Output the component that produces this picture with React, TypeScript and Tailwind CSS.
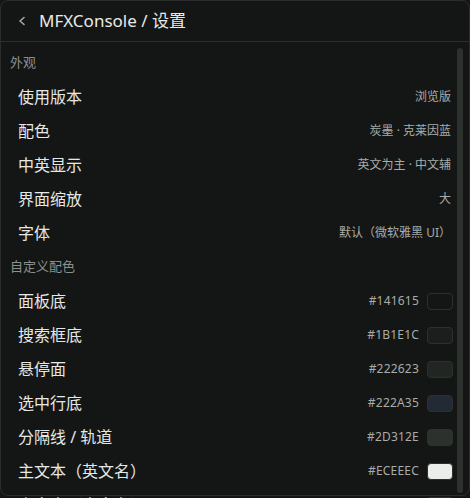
const appearance = [
  { label: "使用版本", value: "浏览版" },
  { label: "配色", value: "炭墨 · 克莱因蓝" },
  { label: "中英显示", value: "英文为主 · 中文辅" },
  { label: "界面缩放", value: "大" },
  { label: "字体", value: "默认（微软雅黑 UI）" },
];

const colors = [
  { label: "面板底", hex: "#141615", swatch: "bg-[#141615]" },
  { label: "搜索框底", hex: "#1B1E1C", swatch: "bg-[#1b1e1c]" },
  { label: "悬停面", hex: "#222623", swatch: "bg-[#222623]" },
  { label: "选中行底", hex: "#222A35", swatch: "bg-[#222a35]" },
  { label: "分隔线 / 轨道", hex: "#2D312E", swatch: "bg-[#2d312e]" },
  { label: "主文本（英文名）", hex: "#ECEEEC", swatch: "bg-[#eceeec]" },
  { label: "次文本（中文名）", hex: "#8B908D", swatch: "bg-[#8b908d]" },
];

const font = { fontFamily: '"Noto Sans", "Noto Sans CJK SC", sans-serif' };

function SectionLabel({ children }: { children: string }) {
  return (
    <div className="flex h-[34px] items-center pl-[9px] text-[13px] text-[#8b908d]">
      {children}
    </div>
  );
}

function Row({ label, children }: { label: string; children: React.ReactNode }) {
  return (
    <div className="flex h-[34px] items-center justify-between pl-[17px]">
      <span className="text-[16px] text-[#e6e8e6]">{label}</span>
      {children}
    </div>
  );
}

export default function App() {
  return (
    <div className="h-[498px] w-[470px] bg-[#141615]" style={font}>
      <div className="flex h-[496px] flex-col rounded-lg border border-[#2a2d2b] bg-[#141615]">
        <header className="flex h-[41px] shrink-0 items-center gap-[13px] border-b border-[#2d312e] pl-[17px]">
          <svg width="8" height="10" viewBox="0 0 8 10" className="text-[#a4a8a5]">
            <polyline
              points="6,1.5 2,5 6,8.5"
              fill="none"
              stroke="currentColor"
              strokeWidth="1.6"
              strokeLinecap="round"
              strokeLinejoin="round"
            />
          </svg>
          <h1 className="text-[17px] text-[#e8eae8]">MFXConsole / 设置</h1>
        </header>
        <div className="flex min-h-0 flex-1">
          <div className="flex-1 pt-1 pr-[4px]">
            <SectionLabel>外观</SectionLabel>
            {appearance.map((item) => (
              <Row key={item.label} label={item.label}>
                <span className="pr-[2px] text-[12px] text-[#a8aca9]">{item.value}</span>
              </Row>
            ))}
            <SectionLabel>自定义配色</SectionLabel>
            {colors.map((item) => (
              <Row key={item.label} label={item.label}>
                <div className="flex items-center gap-2">
                  <span className="text-[12px] tracking-[0.2px] text-[#a8aca9]">{item.hex}</span>
                  <span
                    className={`h-[17px] w-[26px] rounded-[4px] border border-[#2d312e] ${item.swatch}`}
                  />
                </div>
              </Row>
            ))}
          </div>
          <div className="mt-[6px] mr-[6px] mb-[2px] w-[6px] shrink-0 rounded-full bg-[#2d312e]" />
        </div>
      </div>
    </div>
  );
}
